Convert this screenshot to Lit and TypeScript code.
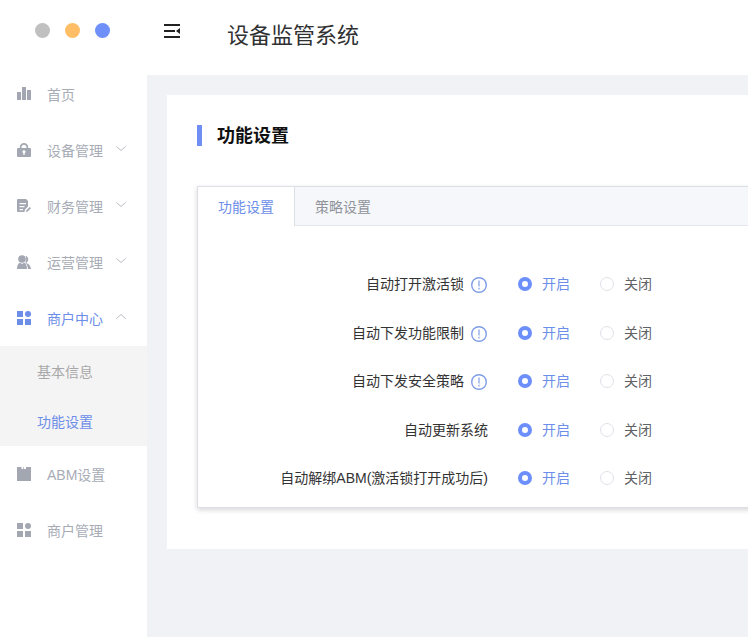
import { LitElement, html, css, svg } from 'lit';
import { customElement } from 'lit/decorators.js';

const ICONS: Record<string, unknown> = {
  chart: svg`<path d="M0 5h4v8H0zM5 0h4v13H5zM10 3h4v10h-4z"/>`,
  lock: svg`<path fill-rule="evenodd" d="M2.800 5V4.200a4.200 4.200 0 0 1 8.400 0V5H13a1 1 0 0 1 1 1v7a1 1 0 0 1-1 1H1a1 1 0 0 1-1-1V6a1 1 0 0 1 1-1zM4.500 5h5V4.200a2.500 2.500 0 0 0-5 0zM7 7.200a1.500 1.500 0 0 0-.8 2.800v1.800h1.600V10A1.500 1.500 0 0 0 7 7.200z"/>`,
  bill: svg`<path fill-rule="evenodd" d="M1 0h8l2 2v5.500L8 10.500 7.500 13H1a1 1 0 0 1-1-1V1a1 1 0 0 1 1-1zM2.500 4v1.300h6.500V4zM2.500 7v1.300h5V7zM2.500 10v1.300h3.500V10z"/><path d="M9 13l.4-1.800 3.300-3.300 1.300 1.300-3.300 3.300z"/>`,
  users: svg`<circle cx="5" cy="4" r="3.800"/><path d="M0 14c0-3.600 1.300-6 3-6.300L5 9l2-1.300c1.700.3 3 2.700 3 6.300z"/><path d="M8.500.8a3.600 3.600 0 0 1 1.200 6.500c-.2.300-.2.600 0 .9 2.300.6 4 3 4.300 5.800h-3c-.3-2.600-1.200-5-2.700-6.200 1-1.500 1.200-4.700.2-7z"/>`,
  grid: svg`<path d="M0 0h6v6H0zM0 8h6v6H0zM8 8h6v6H8z"/><circle cx="11" cy="3" r="3"/>`,
  calendar: svg`<path d="M0 0h4.500v2H6V0h.7v2H9V0h5v14H0z"/>`,
};

@customElement('app-root')
export class AppRoot extends LitElement {
  static styles = css`
    :host {
      display: grid;
      grid-template-columns: 147px 1fr;
      width: 748px;
      height: 637px;
      overflow: hidden;
      background: #fff;
      font-family: 'Liberation Sans', 'Noto Sans CJK SC', sans-serif;
      font-size: 14px;
    }

    .side {
      display: flex;
      flex-direction: column;
    }

    .dots {
      display: flex;
      gap: 15px;
      height: 66px;
      padding: 23px 0 0 35px;
      box-sizing: border-box;
    }

    .dots i {
      width: 15px;
      height: 15px;
      border-radius: 50%;
    }

    .menu-item {
      display: flex;
      align-items: center;
      height: 56px;
      padding-left: 17px;
      color: #a7acb6;
    }

    .menu-item svg.ico {
      width: 14px;
      height: 14px;
      margin-right: 16px;
      fill: #a2a7b2;
    }

    .menu-item.active {
      color: #6d8ee8;
    }

    .menu-item.active svg.ico {
      fill: #6d8ee8;
    }

    .chev {
      width: 10px;
      height: 5px;
      margin: -3px 0 0 13px;
      fill: none;
      stroke: #b9bdc4;
      stroke-width: 1;
    }

    .sub {
      background: #f4f4f5;
    }

    .sub div {
      height: 50px;
      line-height: 52px;
      padding-left: 37px;
      color: #a8a8a8;
    }

    .sub div.on {
      color: #6d8ee8;
    }

    .right {
      display: flex;
      flex-direction: column;
      min-width: 0;
    }

    .head {
      display: flex;
      height: 75px;
      flex: none;
      padding-left: 17px;
      color: #303133;
    }

    .head svg {
      width: 16px;
      height: 14px;
      margin-top: 24px;
    }

    .head h1 {
      margin: 25px 0 0 47px;
      font-size: 22px;
      font-weight: 400;
      line-height: 22px;
    }

    .main {
      flex: 1;
      background: #f0f2f5;
      padding: 20px 0 0 20px;
      min-height: 0;
    }

    .card {
      box-sizing: border-box;
      width: 700px;
      height: 454px;
      background: #fff;
      padding: 30px 0 0 30px;
    }

    .title {
      display: flex;
      align-items: center;
      height: 21px;
      border-left: 5px solid #6f8ff5;
      padding-left: 15px;
      font-size: 18px;
      font-weight: 700;
      color: #111;
    }

    .title span {
      margin-top: -4px;
    }

    .tabs {
      margin-top: 40px;
      width: 640px;
      height: 322px;
      box-sizing: border-box;
      border: 1px solid #dcdfe6;
      box-shadow: 0 2px 5px rgba(0, 0, 0, 0.16);
    }

    .tabbar {
      display: flex;
      height: 38px;
      background: #f5f7fa;
      border-bottom: 1px solid #e4e7ed;
    }

    .tab {
      padding: 0 20px;
      line-height: 40px;
      color: #909399;
      border-right: 1px solid transparent;
    }

    .tab.on {
      height: 39px;
      background: #fff;
      color: #6d8ee8;
      border-right-color: #dcdfe6;
    }

    .form {
      padding-top: 34px;
    }

    .row {
      display: grid;
      grid-template-columns: 290px 1fr;
      height: 48.5px;
      align-items: center;
      color: #333;
    }

    .lab {
      display: flex;
      justify-content: flex-end;
      align-items: center;
    }

    .lab span,
    .radio span {
      margin-top: -2px;
    }

    .lab svg {
      width: 16px;
      height: 16px;
      margin: 2px 1px 0 7px;
      flex: none;
    }

    .radios {
      display: flex;
      padding-left: 30px;
    }

    .radio {
      display: flex;
      align-items: center;
      width: 82px;
      color: #606266;
    }

    .radio i {
      box-sizing: border-box;
      width: 14px;
      height: 14px;
      margin-right: 10px;
      border-radius: 50%;
      border: 1px solid #dfe2e8;
      background: #fff;
    }

    .radio.on {
      color: #6d8ee8;
    }

    .radio.on i {
      border: 4.5px solid #6c8ffb;
    }
  `;

  private item(icon: string, label: string, chev = '', active = false) {
    return html`<div class="menu-item ${active ? 'active' : ''}">
      <svg class="ico" viewBox="0 0 14 14">${ICONS[icon]}</svg>
      <span>${label}</span>
      ${chev === 'down'
        ? html`<svg class="chev" viewBox="0 0 10 5"><path d="M.3.300 5 4.500 9.700.300" /></svg>`
        : chev === 'up'
        ? html`<svg class="chev" viewBox="0 0 10 5"><path d="M.3 4.700 5 .5 9.700 4.700" /></svg>`
        : ''}
    </div>`;
  }

  private row(label: string, info: boolean) {
    return html`<div class="row">
      <div class="lab">
        <span>${label}</span>
        ${info
          ? html`<svg viewBox="0 0 16 16" fill="none" stroke="#7f9de6">
              <circle cx="8" cy="8" r="7.300" stroke-width="1.400" />
              <path d="M8 3.500v6M8 10.800v1.800" stroke-width="2" stroke-opacity=".6" />
            </svg>`
          : ''}
      </div>
      <div class="radios">
        <div class="radio on"><i></i><span>开启</span></div>
        <div class="radio"><i></i><span>关闭</span></div>
      </div>
    </div>`;
  }

  render() {
    return html`
      <aside class="side">
        <div class="dots">
          <i style="background:#c0c0c0"></i>
          <i style="background:#ffbe66"></i>
          <i style="background:#6f8ff9"></i>
        </div>
        ${this.item('chart', '首页')}
        ${this.item('lock', '设备管理', 'down')}
        ${this.item('bill', '财务管理', 'down')}
        ${this.item('users', '运营管理', 'down')}
        ${this.item('grid', '商户中心', 'up', true)}
        <div class="sub">
          <div>基本信息</div>
          <div class="on">功能设置</div>
        </div>
        ${this.item('calendar', 'ABM设置')}
        ${this.item('grid', '商户管理')}
      </aside>
      <div class="right">
        <header class="head">
          <svg viewBox="0 0 16 14" fill="#222">
            <path d="M0 0h16v2H0zM0 6h11v2H0zM0 12h16v2H0zM16 4v6l-4-3z" />
          </svg>
          <h1>设备监管系统</h1>
        </header>
        <main class="main">
          <div class="card">
            <div class="title"><span>功能设置</span></div>
            <div class="tabs">
              <div class="tabbar">
                <div class="tab on">功能设置</div>
                <div class="tab">策略设置</div>
              </div>
              <div class="form">
                ${this.row('自动打开激活锁', true)}
                ${this.row('自动下发功能限制', true)}
                ${this.row('自动下发安全策略', true)}
                ${this.row('自动更新系统', false)}
                ${this.row('自动解绑ABM(激活锁打开成功后)', false)}
              </div>
            </div>
          </div>
        </main>
      </div>
    `;
  }
}
